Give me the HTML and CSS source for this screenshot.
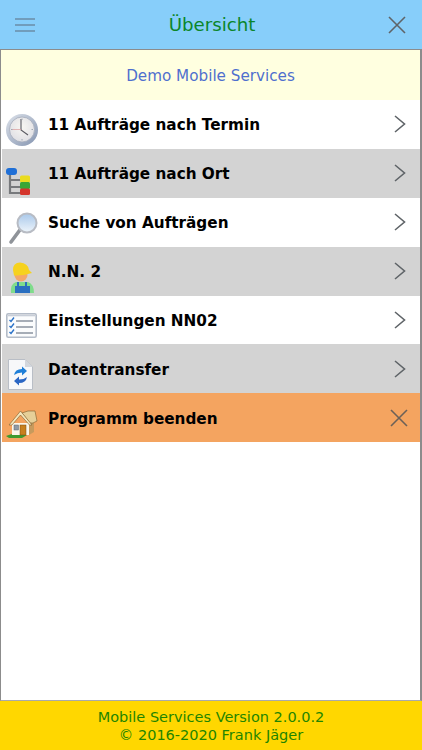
FILE: index.html
```html
<!DOCTYPE html>
<html lang="de">
<head>
    <meta charset="UTF-8">
    <meta name="viewport" content="width=device-width, initial-scale=1.0">
    <title>Übersicht</title>
    <link rel="stylesheet" href="styles.css">
</head>
<body>
    <div class="page">
        <div class="header">
            <svg class="header-icon" viewBox="0 0 22 14" width="22" height="14">
                <path d="M1 1H21M1 7H21M1 13H21" stroke="#5c6d7e" stroke-width="1.100" fill="none"/>
            </svg>
            <h1>Übersicht</h1>
            <svg class="header-icon" viewBox="0 0 18 18" width="18" height="18">
                <path d="M1 1L17 17M17 1L1 17" stroke="#5f6468" stroke-width="1.600" fill="none"/>
            </svg>
        </div>

        <div class="content">
            <div class="intro">Demo Mobile Services</div>

            <div class="menu">
                <div class="menu-row">
                    <svg class="menu-icon" viewBox="0 0 36 36" width="36" height="36">
                        <defs>
                            <linearGradient id="clockRim" x1="0" y1="0" x2="1" y2="1">
                                <stop offset="0" stop-color="#dde2ea"/>
                                <stop offset="1" stop-color="#8494b0"/>
                            </linearGradient>
                            <radialGradient id="clockFace" cx="0.5" cy="0.4" r="0.7">
                                <stop offset="0" stop-color="#f8f6f2"/>
                                <stop offset="1" stop-color="#dcdce2"/>
                            </radialGradient>
                        </defs>
                        <circle cx="18" cy="19" r="16" fill="url(#clockRim)"/>
                        <circle cx="18" cy="18.500" r="12.500" fill="url(#clockFace)" stroke="#a3abba" stroke-width="0.800"/>
                        <path d="M17 8V19L24 24" stroke="#5a5a62" stroke-width="1.100" fill="none"/>
                        <path d="M8 18.500H17" stroke="#dca5a5" stroke-width="0.800"/>
                        <path d="M18 7.500v1.500M18 28v1.500M7 18.500h1.500M27.500 18.500H29" stroke="#a0a8b4" stroke-width="1"/>
                    </svg>
                    <span class="menu-label">11 Aufträge nach Termin</span>
                    <svg class="menu-arrow" viewBox="0 0 12 18" width="12" height="18"><path d="M1 1L10.500 9L1 17" stroke="#5f6468" stroke-width="1.600" fill="none"/></svg>
                </div>
                <div class="menu-row alt">
                    <svg class="menu-icon" viewBox="0 0 36 36" width="36" height="36">
                        <path d="M6 14V33H16M6 20H16M6 27H16" stroke="#77797c" stroke-width="2.200" fill="none"/>
                        <rect x="2" y="8" width="11" height="7" rx="3" fill="#1f6fd6"/>
                        <rect x="16" y="15.500" width="10" height="7" rx="1.500" fill="#eadc20"/>
                        <rect x="16" y="22" width="10" height="7" rx="1.500" fill="#3aa636"/>
                        <rect x="16" y="28.500" width="10" height="6.500" rx="1.500" fill="#d4352c"/>
                    </svg>
                    <span class="menu-label">11 Aufträge nach Ort</span>
                    <svg class="menu-arrow" viewBox="0 0 12 18" width="12" height="18"><path d="M1 1L10.500 9L1 17" stroke="#5f6468" stroke-width="1.600" fill="none"/></svg>
                </div>
                <div class="menu-row">
                    <svg class="menu-icon" viewBox="0 0 36 36" width="36" height="36">
                        <defs>
                            <linearGradient id="lens" x1="0" y1="0" x2="0" y2="1">
                                <stop offset="0" stop-color="#a9c8ea"/>
                                <stop offset="1" stop-color="#eef5fb"/>
                            </linearGradient>
                        </defs>
                        <path d="M15.500 21.500L7 33" stroke="#8f9399" stroke-width="3.600" stroke-linecap="round"/>
                        <circle cx="23" cy="14" r="9.500" fill="url(#lens)" stroke="#b8bcc4" stroke-width="2"/>
                    </svg>
                    <span class="menu-label">Suche von Aufträgen</span>
                    <svg class="menu-arrow" viewBox="0 0 12 18" width="12" height="18"><path d="M1 1L10.500 9L1 17" stroke="#5f6468" stroke-width="1.600" fill="none"/></svg>
                </div>
                <div class="menu-row alt">
                    <svg class="menu-icon" viewBox="0 0 36 36" width="36" height="36">
                        <path d="M7 35Q6 26 12 24H24Q30 26 30 35Z" fill="#7fdc8c"/>
                        <path d="M13 24V28H11V35H26V28H23V24H21V28H15V24Z" fill="#2a6fc0"/>
                        <circle cx="17" cy="17" r="6.500" fill="#f4a868"/>
                        <path d="M9 12Q9 4.500 16 4.500Q24 5 25 12L28 15Q18 18 10 17.500Z" fill="#f6d21e"/>
                    </svg>
                    <span class="menu-label">N.N. 2</span>
                    <svg class="menu-arrow" viewBox="0 0 12 18" width="12" height="18"><path d="M1 1L10.500 9L1 17" stroke="#5f6468" stroke-width="1.600" fill="none"/></svg>
                </div>
                <div class="menu-row">
                    <svg class="menu-icon" viewBox="0 0 36 36" width="36" height="36">
                        <rect x="2.800" y="7.800" width="29.400" height="23.400" rx="1.500" fill="#fbfcfd" stroke="#b4bcc8" stroke-width="1.600"/>
                        <path d="M4 9.500H31" stroke="#c8ced8" stroke-width="1.600"/>
                        <path d="M5.500 14l1.500 1.500 3-4M5.500 20l1.500 1.500 3-4M5.500 26l1.500 1.500 3-4" stroke="#2a72c8" stroke-width="1.400" fill="none"/>
                        <path d="M12 15H29M12 21H29M12 27H29" stroke="#8b93a0" stroke-width="1.300"/>
                    </svg>
                    <span class="menu-label">Einstellungen NN02</span>
                    <svg class="menu-arrow" viewBox="0 0 12 18" width="12" height="18"><path d="M1 1L10.500 9L1 17" stroke="#5f6468" stroke-width="1.600" fill="none"/></svg>
                </div>
                <div class="menu-row alt">
                    <svg class="menu-icon" viewBox="0 0 36 36" width="36" height="36">
                        <path d="M4.500 4.500H21L28.500 12V34.500H4.500Z" fill="#f7f8fa" stroke="#b9bec6" stroke-width="1"/>
                        <path d="M21 4.500V12H28.500Z" fill="#d3d7dd"/>
                        <path d="M10 20Q11 14 18 14V11.500L23 16L18 20.500V17.500Q13 17.500 10 20Z" fill="#1f7fd8"/>
                        <path d="M23 22Q22 28 15 28V30.500L10 26L15 21.500V24.500Q20 24.500 23 22Z" fill="#2a66c4"/>
                    </svg>
                    <span class="menu-label">Datentransfer</span>
                    <svg class="menu-arrow" viewBox="0 0 12 18" width="12" height="18"><path d="M1 1L10.500 9L1 17" stroke="#5f6468" stroke-width="1.600" fill="none"/></svg>
                </div>
                <div class="menu-row exit">
                    <svg class="menu-icon" viewBox="0 0 36 36" width="36" height="36">
                        <path d="M2 32Q10 28 23 31L18 34H5Z" fill="#3f9a2e"/>
                        <path d="M8 19H25V31H8Z" fill="#fbf7ea"/>
                        <path d="M25 17H30V28L25 31Z" fill="#c79a5c"/>
                        <path d="M24 7H31L33 17L29 19H26L18 9Z" fill="#e6cf98" stroke="#7c5c2c" stroke-width="0.600"/>
                        <path d="M5 21L16.500 7L28 21L25.500 21L16.500 11L8 21Z" fill="#f4e6bc" stroke="#7c5c2c" stroke-width="0.600"/>
                        <rect x="16" y="21" width="6" height="10" fill="#c8801e" stroke="#7a4a10" stroke-width="0.500"/>
                        <rect x="10" y="21" width="4.500" height="5" fill="#8f9aa5" stroke="#5c6670" stroke-width="0.500"/>
                    </svg>
                    <span class="menu-label">Programm beenden</span>
                    <svg class="menu-close" viewBox="0 0 18 18" width="18" height="18"><path d="M1 1L17 17M17 1L1 17" stroke="#6b6158" stroke-width="1.600" fill="none"/></svg>
                </div>
            </div>
        </div>

        <div class="footer">
            <div>Mobile Services Version 2.0.0.2</div>
            <div>© 2016-2020 Frank Jäger</div>
        </div>
    </div>
</body>
</html>
```

FILE: styles.css
```css
:root {
    --frame: #8c8c8c;
    --row-alt: #d3d3d3;
    --row-exit: #f4a460;
}

html, body {
    margin: 0;
    padding: 0;
}

body {
    font-family: "DejaVu Sans", Verdana, sans-serif;
    background: #fff;
}

.page {
    display: flex;
    flex-direction: column;
    height: 750px;
    overflow: hidden;
}

.header {
    display: flex;
    justify-content: space-between;
    align-items: center;
    height: 49px;
    padding: 0 16px 0 14px;
    background: #87cefa;
    flex: none;
}

.header h1 {
    margin: 0;
    font-size: 18.200px;
    font-weight: normal;
    color: #0b862b;
}

.header-icon {
    display: block;
}

.content {
    flex: 1;
    border: solid var(--frame);
    border-bottom-color: #aaa;
    border-width: 1px 2px 1px 1px;
}

.intro {
    height: 50px;
    line-height: 53px;
    text-align: center;
    font-size: 15.200px;
    color: #4f6fce;
    background: #ffffe0;
}

.menu {
    padding-left: 1px;
}

.menu-row {
    display: flex;
    align-items: center;
    height: 48.900px;
    padding: 0 14px 0 2px;
    background: #fff;
}

.menu-row.alt {
    background: var(--row-alt);
}

.menu-row.exit {
    background: var(--row-exit);
}

.menu-icon {
    flex: none;
    display: block;
    align-self: flex-end;
    margin-bottom: 2px;
}

.menu-label {
    flex: 1;
    margin-left: 8px;
    padding-top: 2px;
    font-size: 15.250px;
    font-weight: bold;
    color: #000;
}

.menu-arrow {
    flex: none;
}

.menu-close {
    flex: none;
    margin-right: -2px;
}

.footer {
    flex: none;
    height: 49px;
    padding-top: 7px;
    box-sizing: border-box;
    text-align: center;
    font-size: 14.500px;
    line-height: 18px;
    color: #1f8500;
    background: #ffd700;
}
```
